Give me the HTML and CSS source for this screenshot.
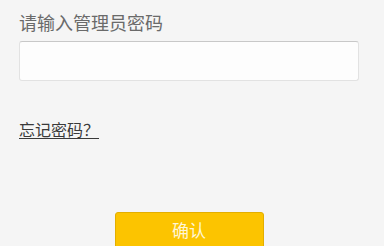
FILE: index.html
```html
<!DOCTYPE html>
<html lang="zh-CN">
<head>
<meta charset="utf-8">
<link rel="stylesheet" href="styles.css">
</head>
<body>
<div class="page">
  <div class="title">请输入管理员密码</div>
  <input class="pwd" type="password">
  <div class="links"><a class="forgot" href="#">忘记密码？</a></div>
  <div class="actions"><button class="confirm" type="button">确认</button></div>
</div>
</body>
</html>
```
FILE: styles.css
```css
html, body {
  margin: 0;
  padding: 0;
  background: #f5f5f5;
  font-family: "Noto Sans CJK SC", "Noto Sans", sans-serif;
}
.page {
  width: 340px;
  padding: 10px 0 0 19px;
  display: flex;
  flex-direction: column;
}
.title {
  font-size: 18px;
  line-height: 24px;
  color: #6a6a6a;
}
.pwd {
  box-sizing: border-box;
  margin: 7px 0 0 0;
  width: 340px;
  height: 40px;
  border: 1px solid #e2e2e2;
  border-top-color: #c8c8c8;
  border-radius: 3px;
  background: #fdfdfd;
  outline: none;
  padding: 0 8px;
}
.links {
  margin-top: 38px;
  line-height: 20px;
}
.forgot {
  font-size: 16px;
  color: #3a3a3a;
  text-decoration: underline;
  text-underline-offset: 2px;
}
.actions {
  margin-top: 73px;
  display: flex;
  justify-content: center;
}
.confirm {
  width: 149px;
  height: 38px;
  background: #fcc400;
  border: 1px solid #e3ae00;
  border-radius: 3px;
  color: #fff6d6;
  font-family: "Noto Sans CJK SC", sans-serif;
  font-size: 17px;
  padding: 0 0 3px 0;
}
```
